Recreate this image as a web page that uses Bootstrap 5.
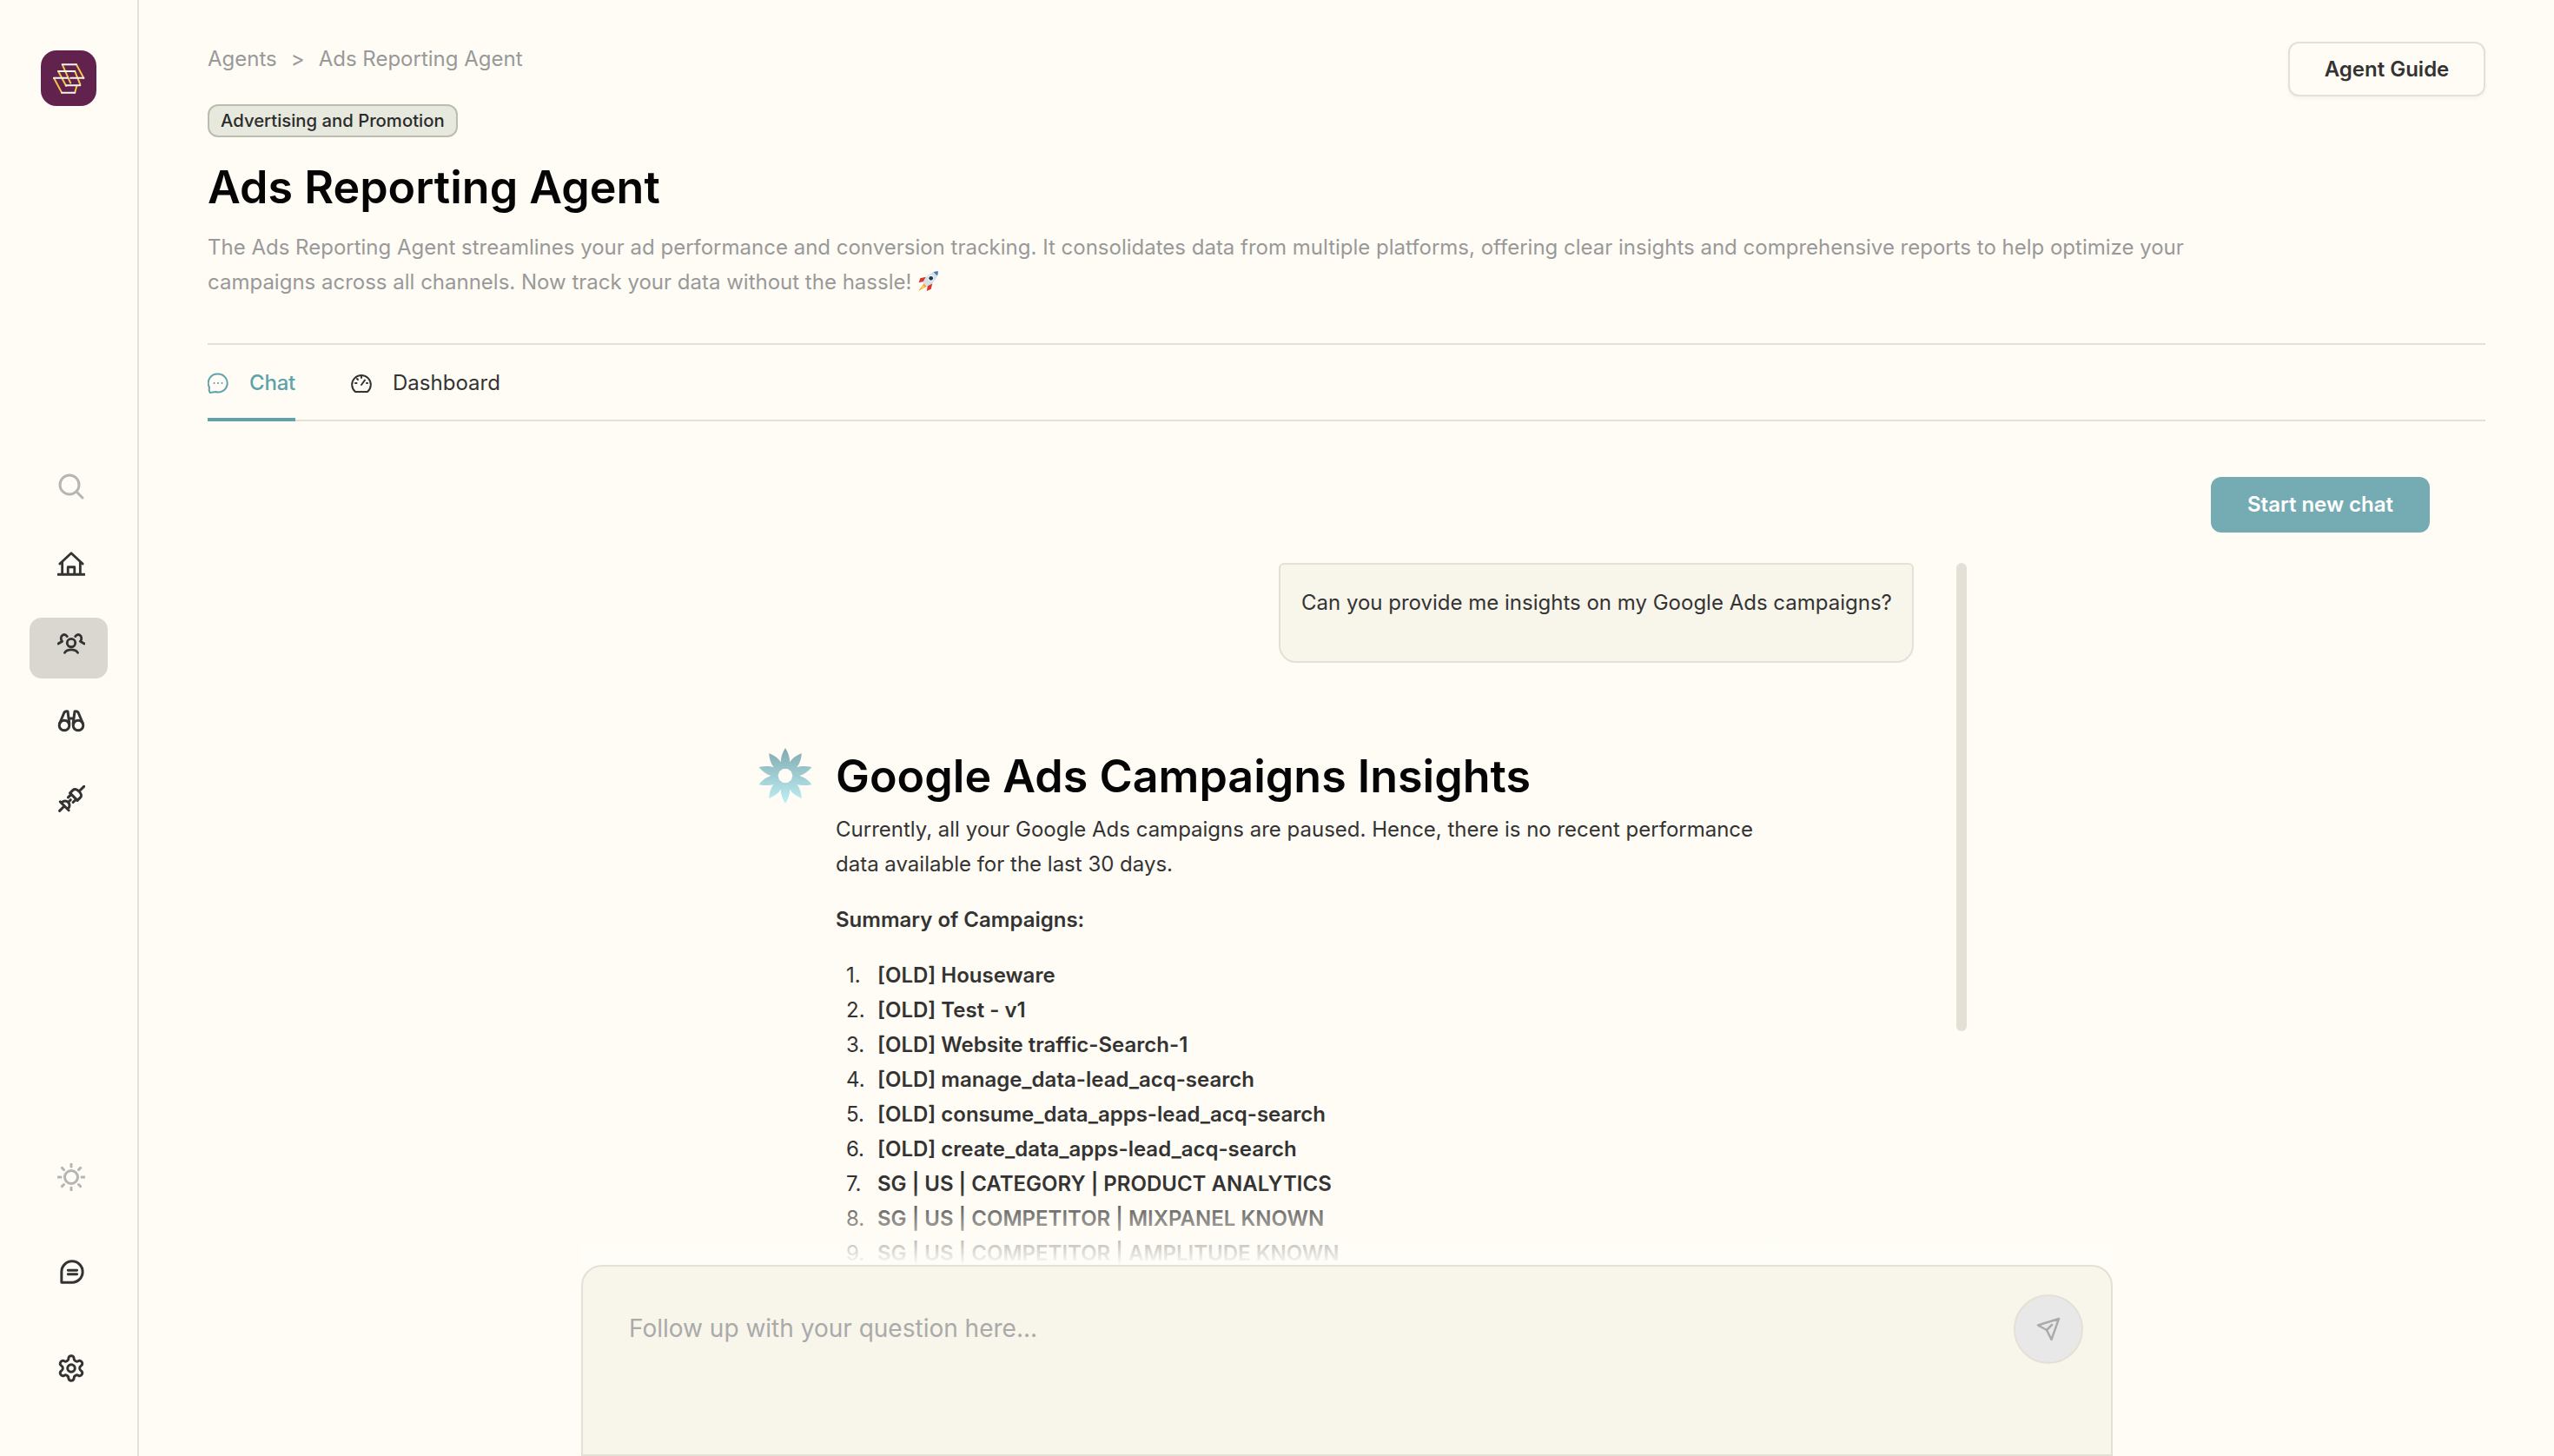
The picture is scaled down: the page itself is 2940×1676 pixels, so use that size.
<!DOCTYPE html>
<html lang="en">
<head>
    <meta charset="UTF-8">
    <meta name="viewport" content="width=device-width, initial-scale=1.0">
    <title>Ads Reporting Agent</title>
    <link href="https://cdn.jsdelivr.net/npm/bootstrap@5.3.0/dist/css/bootstrap.min.css" rel="stylesheet">
    <style>
        body { background: #fffcf5; color: #333; font-family: Inter, "Liberation Sans", sans-serif; font-size: 24px; line-height: 40px; }
        svg { display: block; fill: none; stroke: currentColor; stroke-linecap: round; stroke-linejoin: round; }

        /* sidebar */
        .side-rail { width: 160px; border-right: 2px solid #e5e0d6; padding: 58px 0 0 34px; }
        .side-logo { width: 64px; height: 64px; margin-left: 13px; margin-bottom: 411px; background: #61234d; border-radius: 18px; }
        .side-item { width: 90px; height: 70px; margin-bottom: 19px; border-radius: 14px; color: #333; }
        .side-item.is-active { background: #d9d7cf; }
        .side-item.is-muted { color: #b5b5b5; }
        .side-item svg { margin-left: 32px; }
        .side-bottom { margin-top: auto; padding-bottom: 48px; }
        .side-bottom .side-item { margin-bottom: 38px; }
        .side-bottom .side-item:first-child { margin-bottom: 41px; }
        .side-bottom .side-item:last-child { margin-bottom: 0; }
        .item-search { padding-top: 11px; }
        .item-home { padding-top: 12px; }
        .item-people { padding-top: 17px; }
        .item-scope { padding-top: 17px; }
        .item-plug { padding-top: 15px; }
        .side-item .icon-talk { margin-left: 35px; }
        .side-item .icon-gear { margin-left: 31px; }

        /* header */
        .main-pane { min-width: 0; padding: 48px 79px 0 79px; }
        .crumbs { --bs-breadcrumb-divider: ">"; --bs-breadcrumb-margin-bottom: 0; --bs-breadcrumb-item-padding-x: 16px; --bs-breadcrumb-divider-color: #999; color: #999; }
        .crumbs .breadcrumb-item { color: #999; }
        .crumbs .breadcrumb-item a { color: #999; text-decoration: none; }
        .guide-btn { width: 227px; height: 63px; padding: 0; background: #fffcf5; border: 2px solid #e5e0d6; border-radius: 12px; box-shadow: 0 2px 4px rgba(60, 50, 30, .05); color: #333; font-size: 24px; font-weight: 600; }
        .tag-pill { display: inline-block; height: 38px; padding: 0 13px; margin-top: 32px; background: #e8e9de; border: 2px solid #bcbcb1; border-radius: 12px; color: #2b2b2b; font-size: 20.300px; font-weight: 500; line-height: 34px; }
        .page-title { margin: 24px 0 15px; color: #050505; font-size: 52px; font-weight: 600; line-height: 68px; }
        .page-desc { max-width: 2340px; margin: 0; color: #999; }
        .page-rule { height: 2px; margin-top: 50px; background: #e5e0d6; }

        /* tabs */
        .tab-row { height: 88px; gap: 64px; border-bottom: 2px solid #e5e0d6; }
        .tab-link { display: flex; align-items: center; gap: 24px; height: 88px; padding: 5px 0 0; border-bottom: 4px solid transparent; color: #333; text-decoration: none; }
        .tab-link.is-active { color: #5ea3ab; border-bottom-color: #5ea3ab; font-weight: 500; letter-spacing: -.2px; }

        /* chat */
        .new-chat-btn { width: 252px; height: 64px; margin: 64px 64px 35px auto; padding: 0; background: #75abb3; border: 0; border-radius: 12px; color: #fff; font-size: 24px; font-weight: 600; }
        .chat-wrap { width: 1763px; margin-left: 430px; min-height: 0; }
        .thread-clip { padding-left: 204px; }
        .thread-col { width: 1330px; }
        .thread-thumb { width: 12px; height: 539px; margin-left: 49px; background: #e5e0d6; border-radius: 6px; }
        .user-bubble { width: 731px; height: 115px; margin-left: auto; margin-bottom: 97px; padding: 24px 10px 0 24px; background: #f8f5eb; border: 2px solid #e5e0d6; border-radius: 6px 6px 20px 20px; }
        .flower-mark { width: 89px; height: 66px; }
        .answer-head { margin: 0 0 7px; color: #050505; font-size: 52px; font-weight: 600; line-height: 68px; }
        .answer-body { width: 1100px; }
        .answer-body p { margin-bottom: 24px; }
        .answer-body strong { font-weight: 600; }
        .answer-body ol { margin: 0; padding: 0; list-style: none; counter-reset: campaign; }
        .answer-body li { display: flex; counter-increment: campaign; }
        .answer-body li::before { content: counter(campaign) "."; flex: none; width: 48px; padding-left: 12px; }
        .thread-fade { left: 0; right: 0; bottom: 0; height: 90px; background: linear-gradient(rgba(255, 253, 247, 0), #fffdf7); }
        .composer { height: 220px; flex: none; padding: 51px 120px 0 53px; background: #f8f5eb; border: 2px solid #e5e0d6; border-radius: 24px 24px 0 0; }
        .composer textarea { height: 120px; padding: 0; background: transparent; border: 0; box-shadow: none; color: #333; font-size: 28px; line-height: 40px; resize: none; }
        .composer textarea::placeholder { color: #aaa; }
        .send-btn { top: 32px; right: 32px; width: 80px; height: 80px; padding: 0; background: #e8e8e8; border: 2px solid #e5e0d6; border-radius: 50%; color: #aaa; }
    </style>
</head>
<body class="vh-100 overflow-hidden d-flex">

    <!-- Sidebar -->
    <aside class="side-rail flex-shrink-0 d-flex flex-column">
        <div class="side-logo d-flex align-items-center justify-content-center">
            <svg width="37" height="35" viewBox="90 98 110 104" stroke-width="6" stroke-linecap="butt">
                <path stroke="#f3c64b" d="M122 102 L150 165 M170 102 L195 148 M108 125 L135 175 M165 125 L183 170 M93 148 L120 198 M165 198 L171 175"/>
                <path stroke="#faf5ec" d="M122 102 H170 M150 148 H195 M108 125 H165 M135 173 H183 M93 148 H140 M120 198 H165"/>
            </svg>
        </div>
        <div class="side-item item-search is-muted">
            <svg width="32" height="32" viewBox="0 0 32 32" stroke-width="3"><circle cx="14" cy="14" r="11"/><path d="M22.500 22.500 L29 29"/></svg>
        </div>
        <div class="side-item item-home">
            <svg width="32" height="30" viewBox="0 0 34 30" stroke-width="3"><path d="M3 15 L17 2 L31 15"/><path d="M6 13 V27 M28 13 V27 M1 28 H33"/><path d="M13 27 V19 H21 V27"/></svg>
        </div>
        <div class="side-item item-people is-active">
            <svg width="32" height="26" viewBox="0 0 34 26" stroke-width="3"><circle cx="17" cy="12" r="5"/><path d="M9 24 C12 19 22 19 25 24"/><path d="M12 4 C9 0 3 2 5 9 M1 13 L6 10"/><path d="M22 4 C25 0 31 2 29 9 M33 13 L28 10"/></svg>
        </div>
        <div class="side-item item-scope">
            <svg width="32" height="26" viewBox="0 0 32 26" stroke-width="3"><circle cx="8" cy="18" r="5.800"/><circle cx="24" cy="18" r="5.800"/><path d="M2.500 16 L8 3 Q9.500 1 12 2 L13.800 16 M13 10 H19 M18.200 16 L20 2 Q22.500 1 24 3 L29.500 16"/></svg>
        </div>
        <div class="side-item item-plug">
            <svg width="32" height="32" viewBox="0 0 32 32" stroke-width="3"><g transform="rotate(-45 16 16)"><path d="M-3 16 H5 M5 9 V23 M5 11 C13 10 13 22 5 21 M11 16 H15"/><path d="M20 10 V22 M20 10 H25 C30 10 30 22 25 22 H20 M29 16 H37 M15 12 H20 M15 20 H20"/></g></svg>
        </div>
        <div class="side-bottom">
            <div class="side-item is-muted">
                <svg width="32" height="32" viewBox="0 0 32 32" stroke-width="3"><circle cx="16" cy="16" r="7.500"/><path d="M16 1 V4 M16 28 V31 M1 16 H4 M28 16 H31 M5.400 5.400 L7.500 7.500 M24.500 24.500 L26.600 26.600 M5.400 26.600 L7.500 24.500 M24.500 7.500 L26.600 5.400"/></svg>
            </div>
            <div class="side-item">
                <svg class="icon-talk" width="28" height="28" viewBox="0 0 30 30" stroke-width="3.200"><path d="M2 28 V15 A13 13 0 1 1 15 28 Z"/><path d="M10 13 H21 M10 18 H21"/></svg>
            </div>
            <div class="side-item">
                <svg class="icon-gear" width="34" height="34" viewBox="0 0 24 24" stroke-width="2.100"><path d="M12.220 2h-.44a2 2 0 0 0-2 2v.18a2 2 0 0 1-1 1.730l-.43.250a2 2 0 0 1-2 0l-.15-.08a2 2 0 0 0-2.730.730l-.22.380a2 2 0 0 0 .730 2.730l.15.100a2 2 0 0 1 1 1.720v.510a2 2 0 0 1-1 1.740l-.15.090a2 2 0 0 0-.73 2.730l.22.380a2 2 0 0 0 2.730.730l.15-.08a2 2 0 0 1 2 0l.43.250a2 2 0 0 1 1 1.730V20a2 2 0 0 0 2 2h.44a2 2 0 0 0 2-2v-.18a2 2 0 0 1 1-1.730l.43-.25a2 2 0 0 1 2 0l.15.080a2 2 0 0 0 2.730-.73l.22-.39a2 2 0 0 0-.73-2.730l-.15-.08a2 2 0 0 1-1-1.740v-.5a2 2 0 0 1 1-1.740l.15-.09a2 2 0 0 0 .73-2.730l-.22-.38a2 2 0 0 0-2.730-.73l-.15.080a2 2 0 0 1-2 0l-.43-.25a2 2 0 0 1-1-1.730V4a2 2 0 0 0-2-2z"/><circle cx="12" cy="12" r="3"/></svg>
            </div>
        </div>
    </aside>

    <!-- Main -->
    <main class="main-pane flex-grow-1 d-flex flex-column">
        <header class="d-flex justify-content-between align-items-start">
            <div>
                <nav aria-label="breadcrumb">
                    <ol class="breadcrumb crumbs">
                        <li class="breadcrumb-item"><a href="#">Agents</a></li>
                        <li class="breadcrumb-item active">Ads Reporting Agent</li>
                    </ol>
                </nav>
                <span class="tag-pill">Advertising and Promotion</span>
                <h1 class="page-title">Ads Reporting Agent</h1>
                <p class="page-desc">The Ads Reporting Agent streamlines your ad performance and conversion tracking. It consolidates data from multiple platforms, offering clear insights and comprehensive reports to help optimize your campaigns across all channels. Now track your data without the hassle! <svg class="d-inline-block align-text-top" width="26" height="26" viewBox="0 0 24 24" style="stroke:none">
                    <path fill="#f4a02c" d="M7 15 L1 23 L10 18 Z"/>
                    <path fill="#f8dc6a" d="M6 17 L3.500 21 L8 18.500 Z"/>
                    <path fill="#d9362f" d="M9 8 L3 9.500 L1.500 14 L7 13 Z"/>
                    <path fill="#d9362f" d="M16 15 L14.500 21 L10 23 L11 17 Z"/>
                    <path fill="#d5dfe6" d="M6 14 C8 8 14 2.500 22 2 C21.500 10 16 16 10 18 Z"/>
                    <path fill="#3f7fb0" d="M17 2.800 C19 2.200 20.500 2 22 2 C22 3.500 21.800 5 21.200 7 Z"/>
                    <circle fill="#f5f7f8" cx="14.500" cy="9.500" r="3.200"/>
                    <circle fill="#20384f" cx="14.500" cy="9.500" r="2.200"/>
                </svg></p>
            </div>
            <button type="button" class="btn guide-btn flex-shrink-0">Agent Guide</button>
        </header>
        <div class="page-rule"></div>

        <nav class="nav tab-row flex-shrink-0">
            <a class="tab-link is-active" href="#">
                <svg width="24" height="24" viewBox="0 0 24 24" stroke-width="2"><path d="M12 1.500 A10.500 10.500 0 1 1 9 22 L3 23 C1 21 1.500 19 2 17 A10.500 10.500 0 0 1 12 1.500 Z"/><path d="M7.500 12 H7.600 M12 12 H12.100 M16.500 12 H16.600"/></svg>
                Chat
            </a>
            <a class="tab-link" href="#">
                <svg width="24" height="24" viewBox="0 0 24 24" stroke-width="2"><path d="M5 22 A10.800 10.800 0 1 1 19 22 Z"/><path d="M12 14 L16 8.500 M12 4.500 V6 M5 12 H6.500 M18 12 H19 M7 7 L8 8"/></svg>
                Dashboard
            </a>
        </nav>

        <button type="button" class="btn new-chat-btn flex-shrink-0">Start new chat</button>

        <div class="chat-wrap flex-grow-1 d-flex flex-column">
            <!-- Thread, cut off by the composer -->
            <div class="thread-clip flex-grow-1 d-flex align-items-start overflow-hidden position-relative">
                <div class="thread-col flex-shrink-0">
                    <div class="user-bubble">Can you provide me insights on my Google Ads campaigns?</div>
                    <div class="d-flex">
                        <svg class="flower-mark flex-shrink-0" style="stroke:none" viewBox="0 0 89 66">
                            <defs>
                                <linearGradient id="petalFill" x1="0" y1="0" x2="0" y2="1"><stop offset="0" stop-color="#82a9b0"/><stop offset="1" stop-color="#bdf0f5"/></linearGradient>
                                <path id="petal" d="M0 -32 C5 -24 7 -16 3 -8 L-3 -8 C-7 -16 -5 -24 0 -32 Z"/>
                                <clipPath id="petalClip">
                                    <use href="#petal" transform="translate(31 33)"/>
                                    <use href="#petal" transform="translate(31 33) rotate(36)"/>
                                    <use href="#petal" transform="translate(31 33) rotate(72)"/>
                                    <use href="#petal" transform="translate(31 33) rotate(108)"/>
                                    <use href="#petal" transform="translate(31 33) rotate(144)"/>
                                    <use href="#petal" transform="translate(31 33) rotate(180)"/>
                                    <use href="#petal" transform="translate(31 33) rotate(216)"/>
                                    <use href="#petal" transform="translate(31 33) rotate(252)"/>
                                    <use href="#petal" transform="translate(31 33) rotate(288)"/>
                                    <use href="#petal" transform="translate(31 33) rotate(324)"/>
                                </clipPath>
                            </defs>
                            <rect x="0" y="1" width="62" height="64" fill="url(#petalFill)" clip-path="url(#petalClip)"/>
                        </svg>
                        <div class="answer-body">
                            <h2 class="answer-head">Google Ads Campaigns Insights</h2>
                            <p>Currently, all your Google Ads campaigns are paused. Hence, there is no recent performance data available for the last 30 days.</p>
                            <p><strong>Summary of Campaigns:</strong></p>
                            <ol id="campaignList"></ol>
                        </div>
                    </div>
                </div>
                <div class="thread-thumb flex-shrink-0"></div>
                <div class="thread-fade position-absolute"></div>
            </div>

            <div class="composer position-relative">
                <textarea class="form-control" placeholder="Follow up with your question here..."></textarea>
                <button type="button" class="btn send-btn position-absolute d-flex align-items-center justify-content-center" aria-label="Send">
                    <svg width="28" height="28" viewBox="0 0 28 28" stroke-width="2.500"><path d="M26 2 L2 9.500 L12 15 L17.500 26 Z"/><path d="M12 15 L18 9"/></svg>
                </button>
            </div>
        </div>
    </main>

    <script>
        // Campaign names of the answer
        const campaigns = [
            "[OLD] Houseware",
            "[OLD] Test - v1",
            "[OLD] Website traffic-Search-1",
            "[OLD] manage_data-lead_acq-search",
            "[OLD] consume_data_apps-lead_acq-search",
            "[OLD] create_data_apps-lead_acq-search",
            "SG | US | CATEGORY | PRODUCT ANALYTICS",
            "SG | US | COMPETITOR | MIXPANEL KNOWN",
            "SG | US | COMPETITOR | AMPLITUDE KNOWN"
        ];
        document.getElementById("campaignList").innerHTML = campaigns.map(name => `<li><strong>${name}</strong></li>`).join("");
    </script>
    <script src="https://cdn.jsdelivr.net/npm/bootstrap@5.3.0/dist/js/bootstrap.bundle.min.js"></script>
</body>
</html>
